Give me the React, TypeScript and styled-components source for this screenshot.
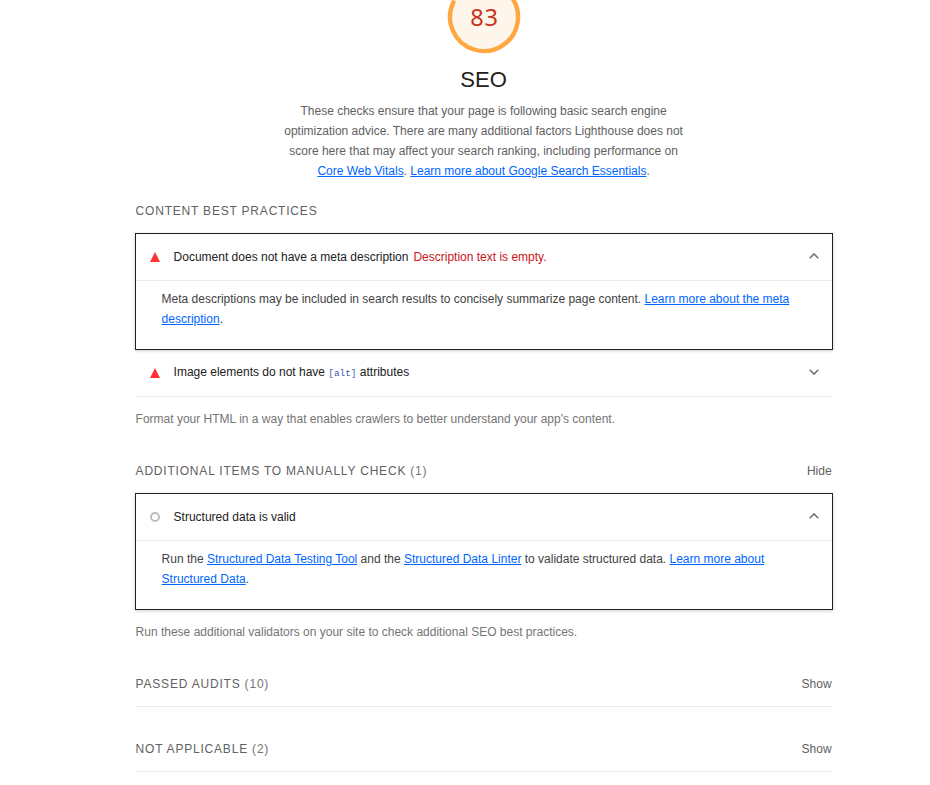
import React from "react";
import styled, { createGlobalStyle } from "styled-components";

const Global = createGlobalStyle`
  * { box-sizing: border-box; }
  body { margin: 0; background: #fff; overflow: hidden; }
`;
const Page = styled.main`
  width: 704px; padding: 0 4px; margin-left: 131.6px; height: 785px; overflow: hidden;
  font: 12px/20px "Liberation Sans", Arial, sans-serif; color: #424242;
  display: flex; flex-direction: column;
`;
const Header = styled.header`
  display: flex; flex-direction: column; align-items: center; height: 181px;
`;
const Gauge = styled.svg`display: block; width: 72px; height: 72px; margin-top: -19px; flex: none; overflow: visible;`;
const Score = styled.text`font: 23.5px "Noto Sans", sans-serif; fill: #c7351b; text-anchor: middle; letter-spacing: .8px;`;
const Title = styled.h1`margin: 13px 0 0; font-size: 22px; font-weight: 400; line-height: 27px; color: #212121;`;
const Intro = styled.p`margin: 8px 0 0; width: 400px; text-align: center; color: #616161; white-space: nowrap;`;
const Link = styled.a`color: #06f; text-decoration: underline;`;
const SectionHead = styled.div<{ $top: number; $height: number; $line?: boolean }>`
  display: flex; justify-content: space-between; margin-top: ${p => p.$top}px; height: ${p => p.$height}px;
  border-bottom: ${p => (p.$line ? "1px solid #ebebeb" : "0")};
`;
const Heading = styled.h2`margin: 0; font-size: 12px; font-weight: 400; letter-spacing: 0.8px; text-transform: uppercase; color: #616161;`;
const Count = styled.span`color: #757575;`;
const Toggle = styled.span`color: #616161;`;
const Card = styled.section`
  width: 698px; height: 117px; margin-left: -1px; border: 1px solid #212121; box-shadow: 0 1px 3px #0003; flex: none;
`;
const Row = styled.div`
  display: flex; align-items: center; height: 47px; padding: 0 13px 0 14px;
  border-bottom: 1px solid #ebebeb; color: #212121; flex: none;
`;
const Label = styled.span<{ $raised?: boolean }>`padding-bottom: ${p => (p.$raised ? "2px" : "0")};`;
const Marker = styled.svg`width: 10px; height: 10px; margin-right: 14px; flex: none;`;
const Chevron = styled.svg`width: 10px; height: 6px; margin: 0 0 2px auto; fill: none; stroke: #757575; stroke-width: 1.6;`;
const ErrorText = styled.span`color: #c7161c; margin-left: 5px;`;
const Details = styled.p`margin: 8px 26px; color: #424242; white-space: nowrap;`;
const Code = styled.code`font: 9.4px "Liberation Mono", monospace; color: #3a5bb5;`;
const Note = styled.p`margin: 12px 0 0; color: #757575; height: 20px;`;

const Fail = () => <Marker viewBox="0 0 10 10"><path d="M5 0L10 10H0Z" fill="#f33" /></Marker>;
const Manual = () => <Marker viewBox="0 0 10 10"><circle cx="5" cy="5" r="4" fill="none" stroke="#bdbdbd" strokeWidth="2" /></Marker>;
const Arrow = ({ up }: { up?: boolean }) => <Chevron viewBox="0 0 10 6"><path d={up ? "M.7 5.2L5 .9L9.3 5.2" : "M.7 .8L5 5.1L9.3 .8"} /></Chevron>;

export default function App() {
  return <><Global /><Page>
    <Header>
      <Gauge viewBox="0 0 72 72">
        <circle cx="36" cy="36" r="33" fill="#fff6eb" />
        <path d="M36 2A34 34 0 1 1 5.4 21.2" fill="none" stroke="#ffa842" strokeWidth="4.4" strokeLinecap="round" />
        <Score x="36.4" y="44.5">83</Score>
      </Gauge>
      <Title>SEO</Title>
      <Intro>These checks ensure that your page is following basic search engine<br />optimization advice. There are many additional factors Lighthouse does not<br />score here that may affect your search ranking, including performance on<br /><Link>Core Web Vitals</Link>. <Link>Learn more about Google Search Essentials</Link>.</Intro>
    </Header>
    <SectionHead $top={20} $height={32}><Heading>Content Best Practices</Heading></SectionHead>
    <Card>
      <Row><Fail /><Label>Document does not have a meta description</Label><ErrorText>Description text is empty.</ErrorText><Arrow up /></Row>
      <Details>Meta descriptions may be included in search results to concisely summarize page content. <Link>Learn more about the meta<br />description</Link>.</Details>
    </Card>
    <Row><Fail /><Label $raised>Image elements do not have <Code>[alt]</Code> attributes</Label><Arrow /></Row>
    <Note>Format your HTML in a way that enables crawlers to better understand your app's content.</Note>
    <SectionHead $top={32} $height={32}><Heading>Additional items to manually check <Count>(1)</Count></Heading><Toggle>Hide</Toggle></SectionHead>
    <Card>
      <Row><Manual /><Label>Structured data is valid</Label><Arrow up /></Row>
      <Details>Run the <Link>Structured Data Testing Tool</Link> and the <Link>Structured Data Linter</Link> to validate structured data. <Link>Learn more about<br />Structured Data</Link>.</Details>
    </Card>
    <Note>Run these additional validators on your site to check additional SEO best practices.</Note>
    <SectionHead $top={32} $height={33} $line><Heading>Passed audits <Count>(10)</Count></Heading><Toggle>Show</Toggle></SectionHead>
    <SectionHead $top={32} $height={33} $line><Heading>Not applicable <Count>(2)</Count></Heading><Toggle>Show</Toggle></SectionHead>
  </Page></>;
}
